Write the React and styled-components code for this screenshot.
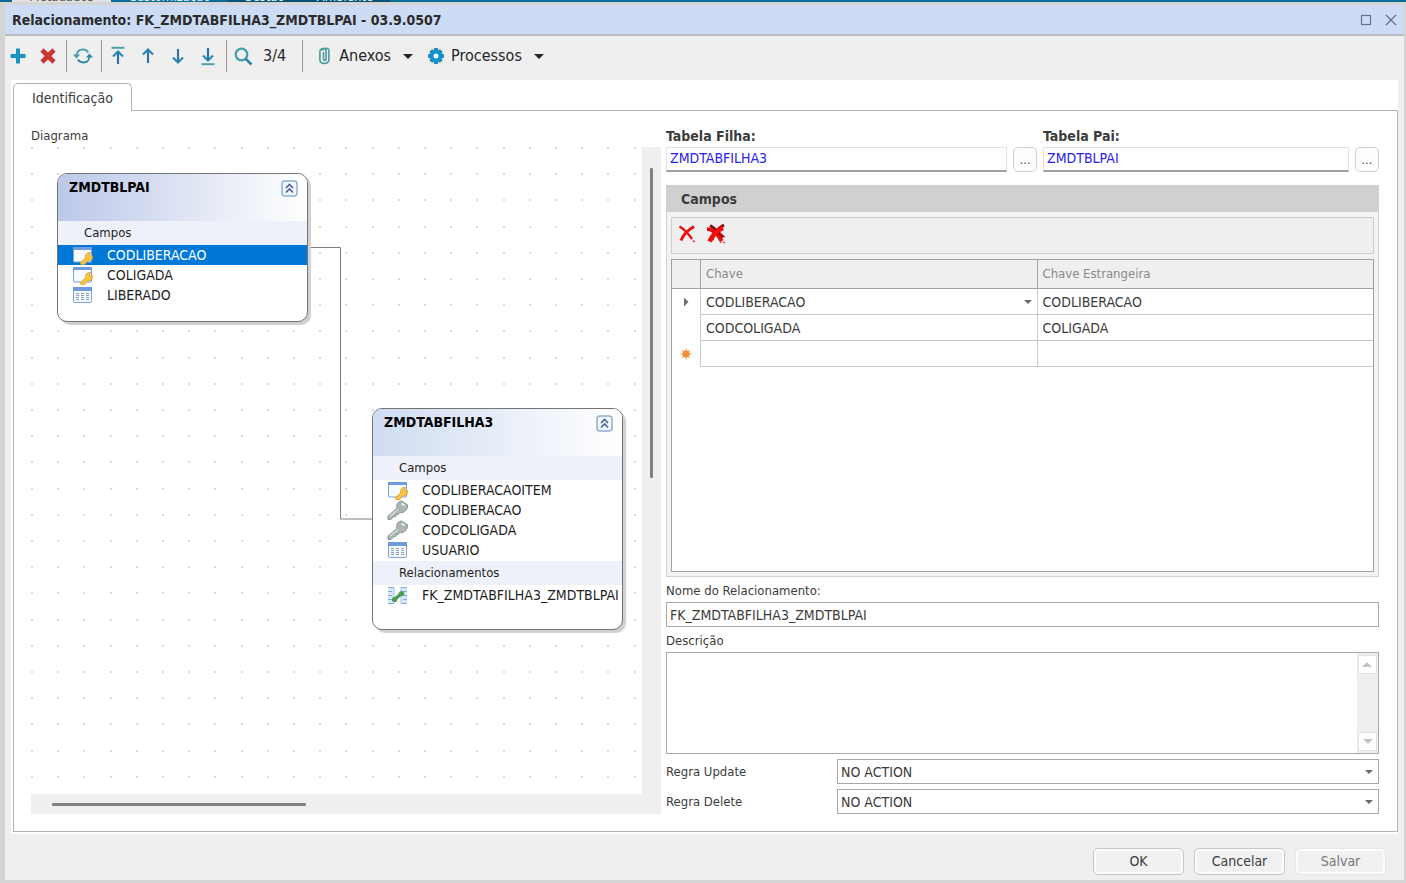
import React, { useState } from "react";
import styled, { createGlobalStyle, css } from "styled-components";

const GlobalStyle = createGlobalStyle`
  * {
    box-sizing: border-box;
  }

  body {
    margin: 0;
    background: #dcdcdc;
    color: #3c3c3c;
    font-family: "DejaVu Sans Condensed", "Noto Sans", sans-serif;
    font-size: 13px;
    line-height: 20px;
  }

  button,
  input,
  select,
  textarea {
    font: inherit;
    color: inherit;
  }
`;

/* ---------- window ---------- */

const Screen = styled.div`
  display: flex;
  flex-direction: column;
  min-height: 100vh;
`;

const BackTabs = styled.div`
  display: flex;
  align-items: flex-end;
  height: 2px;
  overflow: hidden;
  background: #0a6c98;
  color: #e8f2f7;
`;

const BackTab = styled.span`
  flex: none;
  width: ${({ $width }) => $width}px;
  margin-left: ${({ $gap }) => $gap || 0}px;
  line-height: 10px;
  text-align: center;
  background: ${({ $bg }) => $bg || "transparent"};
  color: ${({ $active }) => ($active ? "#555" : "inherit")};
`;

const Dialog = styled.main`
  flex: 1;
  display: flex;
  flex-direction: column;
  background: #efefef;
  border: solid #d4d4d4;
  border-width: 3px 2px 3px 5px;
`;

const TitleBar = styled.header`
  display: flex;
  align-items: center;
  justify-content: space-between;
  height: 31px;
  padding: 0 5px 0 7px;
  background: #cddbf5;
  border-bottom: 2px solid #b9bcc2;
`;

const Title = styled.h1`
  margin: 0;
  font-size: 14px;
  font-weight: bold;
  color: #2b2b2b;
`;

const WindowButtons = styled.div`
  display: flex;
  gap: 9px;
`;

const IconButton = styled.button`
  display: flex;
  align-items: center;
  justify-content: center;
  width: ${({ $width }) => $width || 26}px;
  height: 26px;
  padding: 0;
  border: 0;
  background: none;
`;

const WindowButton = styled(IconButton)`
  width: 16px;
`;

/* ---------- toolbar ---------- */

const Toolbar = styled.div`
  display: flex;
  align-items: center;
  height: 44px;
  padding-bottom: 4px;
  font-size: 16px;
  color: #262626;
`;

const ToolGroup = styled.div`
  display: flex;
  gap: 4px;
`;

const Separator = styled.span`
  width: 1px;
  height: 32px;
  margin: 0 3px 0 5px;
  background: #9a9a9a;
`;

const Counter = styled.span`
  padding: 0 11px 0 7px;
`;

const MenuButton = styled.button`
  display: flex;
  align-items: center;
  gap: 7px;
  height: 26px;
  padding: 0 5px 0 10px;
  border: 0;
  background: none;
`;

const Caret = styled.span`
  width: 0;
  margin-left: ${({ $gap }) => $gap || 0}px;
  border: solid transparent;
  border-width: ${({ $size }) => $size || 3}px;
  border-bottom-width: 0;
  border-top-color: ${({ $color }) => $color || "#6a6a6a"};
`;

/* ---------- tab page ---------- */

const TabArea = styled.div`
  flex: 1;
  display: flex;
  flex-direction: column;
  margin: 0 6px;
  padding: 3px 0 2px 2px;
  background: #fff;
`;

const TabButton = styled.button`
  position: relative;
  align-self: flex-start;
  width: 119px;
  height: 28px;
  margin-bottom: -1px;
  padding: 0;
  border: 1px solid #b4b4b4;
  border-bottom: 0;
  border-radius: 5px 5px 0 0;
  background: #fff;
  font-size: 14px;
`;

const TabPanel = styled.section`
  flex: 1;
  display: grid;
  grid-template-columns: 630px minmax(0, 1fr);
  column-gap: 5px;
  padding: 14px 18px 17px 17px;
  border: 1px solid #b4b4b4;
`;

const Column = styled.div`
  display: flex;
  flex-direction: column;
  min-width: 0;
`;

const TopLabel = styled.label`
  height: 22px;
  font-size: ${({ $bold }) => ($bold ? 14 : 13)}px;
  line-height: 22px;
  font-weight: ${({ $bold }) => ($bold ? "bold" : "normal")};
`;

/* ---------- diagram ---------- */

const DiagramFrame = styled.div`
  flex: 1;
  display: grid;
  grid-template-columns: minmax(0, 1fr) 19px;
  grid-template-rows: minmax(0, 1fr) 20px;
  background: #efefef;
`;

const Canvas = styled.div`
  position: relative;
  overflow: hidden;
  background: #fff;
`;

const CanvasLines = styled.svg`
  position: absolute;
  inset: 0;
  width: 100%;
  height: 100%;
`;

const VerticalTrack = styled.div`
  padding: 21px 8px;
`;

const HorizontalTrack = styled.div`
  padding: 9px 21px;
`;

const Thumb = styled.div`
  background: #808080;
  border-radius: 1px;
  ${({ $vertical }) =>
    $vertical
      ? css`
          width: 3px;
          height: 310px;
        `
      : css`
          width: 254px;
          height: 3px;
        `}
`;

const Node = styled.article`
  position: absolute;
  left: ${({ $x }) => $x}px;
  top: ${({ $y }) => $y}px;
  width: 251px;
  padding-bottom: ${({ $bottom }) => $bottom}px;
  overflow: hidden;
  background: #fff;
  border: 1px solid #747474;
  border-radius: 10px;
  box-shadow: 3px 3px 1px #d0d0d0;
  color: #1e1e1e;
`;

const NodeHeader = styled.div`
  display: flex;
  align-items: flex-start;
  justify-content: space-between;
  height: 47px;
  padding: 1px 9px 0 11px;
  background: linear-gradient(to right, ${({ $from }) => $from}, #fff);
`;

const NodeTitle = styled.h2`
  margin: 0;
  font-size: 14px;
  line-height: 24px;
  color: #000;
`;

const NodeSection = styled.div`
  height: 24px;
  padding-left: 26px;
  line-height: 24px;
  background: #eef1f9;
`;

const NodeList = styled.ul`
  margin: 0;
  padding: 0 0 1px;
  list-style: none;
`;

const NodeRow = styled.li`
  display: flex;
  align-items: center;
  gap: 14px;
  height: 20px;
  padding-left: 14px;
  font-size: 14px;
  white-space: nowrap;
  background: ${({ $selected }) => ($selected ? "#0078d7" : "transparent")};
  color: ${({ $selected }) => ($selected ? "#fff" : "inherit")};

  svg {
    flex: none;
  }
`;

/* ---------- right side ---------- */

const TableRefs = styled.div`
  display: grid;
  grid-template-columns: 370fr 335fr;
  column-gap: 6px;
  margin-bottom: 13px;
`;

const RefLine = styled.div`
  display: flex;
  gap: 6px;
`;

const RefInput = styled.input`
  flex: 1;
  min-width: 0;
  height: 25px;
  padding: 0 3px 2px;
  border: 1px solid #e2e2e2;
  border-bottom: 2px solid #a0a0a0;
  background: #fff;
  font-size: 14px;
  color: #2a20f0;
`;

const BrowseButton = styled.button`
  width: 24px;
  height: 25px;
  padding: 0;
  border: 1px solid #cfcfcf;
  border-radius: 5px;
  background: #fdfdfd;
  color: #6b4a52;
`;

const Group = styled.fieldset`
  flex: 1;
  display: flex;
  flex-direction: column;
  min-width: 0;
  margin: 0;
  padding: 0 4px 4px;
  border: 1px solid #d0d0d0;
  background: #f3f3f3;
`;

const GroupTitle = styled.h3`
  height: 26px;
  margin: 0 -4px 5px;
  padding-left: 14px;
  font-size: 14px;
  line-height: 26px;
  background: #d0d0d0;
`;

const GroupTools = styled.div`
  display: flex;
  align-items: center;
  height: 37px;
  margin-bottom: 5px;
  padding: 0 2px 4px;
  border: 1px solid #cdcdcd;
  background: #efefef;
`;

const GridFrame = styled.div`
  flex: 1;
  border: 1px solid #a0a0a0;
  background: #fff;
`;

const Grid = styled.table`
  width: 100%;
  table-layout: fixed;
  border-collapse: separate;
  border-spacing: 0;
`;

const HeadCell = styled.th`
  width: ${({ $width }) => ($width ? `${$width}px` : "auto")};
  height: 29px;
  padding: 0 5px;
  border-bottom: 1px solid #a4a4a4;
  border-left: ${({ $width }) => ($width ? "0" : "1px solid #a4a4a4")};
  background: #efefef;
  font-weight: normal;
  text-align: left;
  color: #8a8a8a;
`;

const Cell = styled.td`
  height: 26px;
  padding: 0 5px;
  border: solid #c8c8c8;
  border-width: 0 0 1px 1px;
  font-size: 14px;
`;

const MarkCell = styled.td`
  padding: 0;
  text-align: center;

  svg {
    display: block;
    margin: 0 auto;
  }
`;

const CellContent = styled.div`
  display: flex;
  align-items: center;
  justify-content: space-between;
`;

const Label = styled.label`
  height: 25px;
  padding-top: 3px;
  line-height: 22px;
`;

const boxed = css`
  border: 1px solid #a9a9a9;
  border-radius: 0;
  background: #fff;
`;

const TextInput = styled.input`
  ${boxed}
  width: 100%;
  height: 25px;
  padding: 0 3px;
  font-size: 14px;
`;

const MemoBox = styled.div`
  ${boxed}
  display: flex;
  height: 102px;
  margin-bottom: 5px;
`;

const Memo = styled.textarea`
  flex: 1;
  min-width: 0;
  padding: 3px;
  border: 0;
  resize: none;
`;

const MemoScroll = styled.div`
  display: flex;
  flex-direction: column;
  justify-content: space-between;
  width: 21px;
  padding: 2px 1px;
  background: #efefef;
`;

const MemoArrow = styled.button`
  display: flex;
  align-items: center;
  justify-content: center;
  height: 19px;
  padding: 0;
  border: 1px solid #e2e2e2;
  background: #fff;
  transform: ${({ $up }) => ($up ? "rotate(180deg)" : "none")};
`;

const RuleRow = styled.div`
  display: grid;
  grid-template-columns: 171px minmax(0, 1fr);
  line-height: 25px;

  & + & {
    margin-top: 5px;
  }
`;

const SelectBox = styled.div`
  ${boxed}
  display: grid;
  align-items: center;
  height: 25px;

  > * {
    grid-area: 1 / 1;
  }

  ${Caret} {
    justify-self: end;
    margin-right: 5px;
    pointer-events: none;
  }
`;

const Select = styled.select`
  width: 100%;
  height: 23px;
  padding: 0 3px;
  border: 0;
  background: none;
  font-size: 14px;
  appearance: none;
`;

const Footer = styled.footer`
  display: flex;
  justify-content: flex-end;
  gap: 10px;
  padding: 14px 18px 5px;
`;

const FooterButton = styled.button`
  width: 91px;
  height: 27px;
  padding: 0 0 2px;
  border: 1px solid #c6c6c6;
  border-radius: 5px;
  background: #f1f1f1;
  box-shadow: inset 0 0 0 2px #fcfcfc;
  font-size: 14px;

  &:disabled {
    border-color: #e6e6e6;
    color: #777;
  }
`;

/* ---------- icons ---------- */

const ArrowIcon = ({ down, bar }) => (
  <svg width="18" height="20" viewBox="0 0 18 20" fill="none" strokeWidth="2">
    <g transform={down ? "rotate(180 9 10)" : undefined}>
      {bar && <path d="M2.5 1.8h13" stroke="#4aa3a8" />}
      <path d={bar ? "M9 5.500V18" : "M9 4v13"} stroke="#2f73a8" strokeWidth="2.200" />
      <path d={bar ? "M4 10.500 9 5.500l5 5" : "M4 8.500l5-5 5 5"} stroke="#2385b4" />
    </g>
  </svg>
);

const AddIcon = () => (
  <svg width="16" height="16" viewBox="0 0 16 16">
    <path d="M8 0.500v15M0.500 8h15" stroke="#1a93c0" strokeWidth="4" />
  </svg>
);

const RemoveIcon = () => (
  <svg width="16" height="16" viewBox="0 0 16 16">
    <path d="M2 2l12 12M14 2L2 14" stroke="#cc3430" strokeWidth="4.6" />
  </svg>
);

const RefreshIcon = () => (
  <svg width="20" height="18" viewBox="0 0 20 18">
    <g fill="none" strokeWidth="1.8">
      <path d="M3.5 8.5C3.8 4.6 6.5 2.5 9.8 2.5c2.400 0 4.200 1 5.400 2.900" stroke="#4aa3a8" />
      <path d="M16.500 9.500c-.3 3.900-3 6-6.300 6-2.400 0-4.200-1-5.400-2.900" stroke="#2c86a8" />
    </g>
    <path d="M0 7.500h7L3.500 11.500z" fill="#3f9bb0" />
    <path d="M13 10.500h7L16.500 6.500z" fill="#2c86a8" />
  </svg>
);

const SearchIcon = () => (
  <svg width="19" height="19" viewBox="0 0 19 19" fill="none">
    <circle cx="7.500" cy="7.500" r="5.800" stroke="#3f9fa8" strokeWidth="2.200" />
    <path d="M11.800 11.800 17.500 17.500" stroke="#2b7fa6" strokeWidth="2.600" />
  </svg>
);

const ClipIcon = () => (
  <svg width="16" height="18" viewBox="0 0 16 18" fill="none">
    <path
      d="M7.500 5v7.200c0 1.600 2.600 1.600 2.600 0V4.500c0-4-6.200-4-6.200 0v8.300c0 4.800 9 4.800 9 0V3.500c0-3-6-3-7 0"
      stroke="#4b9a9c"
      strokeWidth="1.600"
    />
  </svg>
);

const GearIcon = () => (
  <svg width="16" height="16" viewBox="0 0 16 16">
    <g stroke="#3a86a5" strokeWidth="4.200">
      <path d="M8 0v16M0 8h16M2.600 2.600l10.800 10.800M13.400 2.600 2.600 13.400" />
    </g>
    <circle cx="8" cy="8" r="6.300" fill="#0c94cc" />
    <circle cx="8" cy="8" r="2.500" fill="#f4f4f4" />
  </svg>
);

const CollapseIcon = () => (
  <svg width="17" height="17" viewBox="0 0 17 17">
    <rect x="1" y="1" width="15" height="15" rx="3" fill="#f2f7fc" stroke="#8cb0cf" strokeWidth="1.500" />
    <path
      d="M5 8l3.500-3.500L12 8M5 12.500 8.500 9l3.500 3.500"
      fill="none"
      stroke="#51619f"
      strokeWidth="1.700"
    />
  </svg>
);

const PrimaryKeyIcon = () => (
  <svg width="21" height="20" viewBox="0 0 21 20">
    <rect x="1.500" y="2.500" width="18" height="14.500" rx="1" fill="#f7fbff" stroke="#7ba3dc" />
    <path d="M1 2h19v3H1z" fill="#6f9bdd" />
    <path
      d="M8.500 17.500 13.500 13c-.8-3.500 2-6.200 5-5.500L17.500 10l1 1.300 2.200-.6c.5 3.400-2 5.800-5 5L12.500 19.500H9z"
      fill="#f8c63e"
      stroke="#dc9d2c"
      strokeWidth="0.900"
    />
  </svg>
);

const FieldIcon = () => (
  <svg width="21" height="18" viewBox="0 0 21 18">
    <rect x="1.500" y="1.500" width="18" height="15" rx="1" fill="#f2f8ff" stroke="#7ba3dc" />
    <path d="M1 1h19v4H1z" fill="#6f9bdd" />
    <path
      d="M4 7.500h3M4 9.500h3M4 11.500h3M4 13.500h3M9 7.500h3M9 9.500h3M9 11.500h3M9 13.500h3M14 7.500h3M14 9.500h3M14 11.500h3M14 13.500h3"
      stroke="#9aa0aa"
    />
  </svg>
);

const ForeignKeyIcon = () => (
  <svg width="21" height="20" viewBox="0 0 21 20">
    <path
      d="M1 16 9.800 8.500C9 4 11.500 1 14.500 1l6 3.800c.6 4.600-3 8.400-7.500 7.800L11 14.500l-2 .2-.3 1.800-2.200.3L4 19.500H1z"
      fill="#aeb5b5"
      stroke="#838a8a"
      strokeWidth="0.900"
    />
    <path d="M14.500 3.500l3 2" stroke="#f2f4f4" strokeWidth="1.800" />
    <path d="M2.500 16.500 11 9.500" stroke="#d9dddd" strokeWidth="1.200" />
  </svg>
);

const RelationIcon = () => (
  <svg width="21" height="19" viewBox="0 0 21 19">
    <path d="M1 1h6v17H1zM14 1h6v17h-6z" fill="#d5e7fa" />
    <path
      d="M1 1.500h6M1 5.500h4M1 9.500h4M1 13.500h4M1 17.500h6M14 1.500h6M16 5.500h4M16 9.500h4M16 13.500h4M14 17.500h6"
      stroke="#86abdb"
    />
    <path d="M7 1v17M14 1v17" stroke="#a9c7ea" />
    <path d="M7 14 15 7" stroke="#4c9b52" strokeWidth="3.400" />
    <circle cx="7.500" cy="13.500" r="2.600" fill="#4c9b52" />
    <circle cx="14.500" cy="7.500" r="2.600" fill="#4c9b52" />
  </svg>
);

const DeleteIcon = () => (
  <svg width="18" height="18" viewBox="0 0 18 18" fill="none" stroke="#f00c0c">
    <path d="M1.500 1.500C6 4 10.500 9 14 14" strokeWidth="2.400" />
    <path d="M16 1.500C10 5 5 10 3 15.500" strokeWidth="2.800" />
    <path d="M15 15.500l1.500 1.500" strokeWidth="1.200" />
  </svg>
);

const DeleteAllIcon = () => (
  <svg width="20" height="20" viewBox="0 0 20 20" fill="none">
    <path d="M4 1.500c5 3 9 7 13 12M18 1C12 4 8 10 6 16" stroke="#8e0909" strokeWidth="3" />
    <path d="M1 5c5 0 11 6 15 12" stroke="#e60a0a" strokeWidth="3.600" />
    <path d="M17 4C10 7 6 12 3.500 17.500" stroke="#f60c0c" strokeWidth="4.600" />
    <path d="M14 9l5 4M12 14l3 5M17 18l2 1" stroke="#e62a2a" strokeWidth="1.200" />
  </svg>
);

const RowMarker = () => (
  <svg width="6" height="10" viewBox="0 0 6 10">
    <path d="M1 0.500 5.500 5 1 9.500z" fill="#6f6f6f" />
  </svg>
);

const NewRowMarker = () => (
  <svg width="12" height="12" viewBox="0 0 12 12">
    <path
      d="M6 0.500v11M0.500 6h11M2.200 2.200l7.600 7.600M9.800 2.200 2.200 9.800"
      stroke="#f3b172"
      strokeWidth="1.300"
    />
    <circle cx="6" cy="6" r="3.500" fill="#f0913a" />
  </svg>
);

const icons = {
  primary: PrimaryKeyIcon,
  foreign: ForeignKeyIcon,
  field: FieldIcon,
  relation: RelationIcon,
};

/* ---------- diagram parts ---------- */

const dotSteps = [0, 26, 52, 79, 105];

const nodes = [
  {
    title: "ZMDTBLPAI",
    x: 26,
    y: 26,
    bottom: 15,
    from: "#bcc8e8",
    sections: [
      {
        name: "Campos",
        rows: [
          { icon: "primary", text: "CODLIBERACAO", selected: true },
          { icon: "primary", text: "COLIGADA" },
          { icon: "field", text: "LIBERADO" },
        ],
      },
    ],
  },
  {
    title: "ZMDTABFILHA3",
    x: 341,
    y: 261,
    bottom: 23,
    from: "#cfdcf1",
    sections: [
      {
        name: "Campos",
        rows: [
          { icon: "primary", text: "CODLIBERACAOITEM" },
          { icon: "foreign", text: "CODLIBERACAO" },
          { icon: "foreign", text: "CODCOLIGADA" },
          { icon: "field", text: "USUARIO" },
        ],
      },
      {
        name: "Relacionamentos",
        rows: [{ icon: "relation", text: "FK_ZMDTABFILHA3_ZMDTBLPAI" }],
      },
    ],
  },
];

function Diagram() {
  return (
    <DiagramFrame>
      <Canvas>
        <CanvasLines>
          <defs>
            <pattern id="dots" width="131" height="131" patternUnits="userSpaceOnUse">
              {dotSteps.map((y) =>
                dotSteps.map((x) => (
                  <rect key={`${x}-${y}`} x={x} y={y} width="2" height="2" fill="#dadada" />
                ))
              )}
            </pattern>
          </defs>
          <rect width="100%" height="100%" fill="url(#dots)" />
          <path d="M277 100.500h32.500v271.500h32" fill="none" stroke="#7c7c7c" />
        </CanvasLines>
        {nodes.map((node) => (
          <Node key={node.title} $x={node.x} $y={node.y} $bottom={node.bottom}>
            <NodeHeader $from={node.from}>
              <NodeTitle>{node.title}</NodeTitle>
              <IconButton $width={17} aria-label="Recolher">
                <CollapseIcon />
              </IconButton>
            </NodeHeader>
            {node.sections.map((section) => (
              <React.Fragment key={section.name}>
                <NodeSection>{section.name}</NodeSection>
                <NodeList>
                  {section.rows.map((row) => {
                    const Icon = icons[row.icon];
                    return (
                      <NodeRow key={row.text} $selected={row.selected}>
                        <Icon />
                        {row.text}
                      </NodeRow>
                    );
                  })}
                </NodeList>
              </React.Fragment>
            ))}
          </Node>
        ))}
      </Canvas>
      <VerticalTrack>
        <Thumb $vertical />
      </VerticalTrack>
      <HorizontalTrack>
        <Thumb />
      </HorizontalTrack>
    </DiagramFrame>
  );
}

function TableRef({ id, label, value }) {
  const [text, setText] = useState(value);

  return (
    <Column>
      <TopLabel htmlFor={id} $bold>
        {label}
      </TopLabel>
      <RefLine>
        <RefInput id={id} value={text} onChange={(e) => setText(e.target.value)} />
        <BrowseButton aria-label={`Procurar ${label}`}>...</BrowseButton>
      </RefLine>
    </Column>
  );
}

function Rule({ id, label }) {
  return (
    <RuleRow>
      <label htmlFor={id}>{label}</label>
      <SelectBox>
        <Select id={id} defaultValue="NO ACTION">
          <option>NO ACTION</option>
          <option>CASCADE</option>
          <option>SET NULL</option>
        </Select>
        <Caret $size={4} />
      </SelectBox>
    </RuleRow>
  );
}

function App() {
  const [name, setName] = useState("FK_ZMDTABFILHA3_ZMDTBLPAI");
  const [description, setDescription] = useState("");

  return (
    <Screen>
      <GlobalStyle />
      <BackTabs>
        <BackTab $width={99} $gap={12} $bg="#e2e2e2" $active>
          Metadados
        </BackTab>
        <BackTab $width={117}>Customização</BackTab>
        <BackTab $width={72} $bg="#075274">
          Gestão
        </BackTab>
        <BackTab $width={90} $bg="#075274">
          Ambiente
        </BackTab>
      </BackTabs>
      <Dialog>
        <TitleBar>
          <Title>Relacionamento: FK_ZMDTABFILHA3_ZMDTBLPAI - 03.9.0507</Title>
          <WindowButtons>
            <WindowButton aria-label="Maximizar">
              <svg width="12" height="12" viewBox="0 0 12 12">
                <rect x="1.500" y="1.500" width="9" height="9" fill="none" stroke="#66738a" strokeWidth="1.200" />
              </svg>
            </WindowButton>
            <WindowButton aria-label="Fechar">
              <svg width="12" height="12" viewBox="0 0 12 12">
                <path d="M1 1l10 10M11 1L1 11" stroke="#66738a" strokeWidth="1.300" />
              </svg>
            </WindowButton>
          </WindowButtons>
        </TitleBar>
        <Toolbar>
          <ToolGroup>
            <IconButton aria-label="Incluir">
              <AddIcon />
            </IconButton>
            <IconButton aria-label="Excluir">
              <RemoveIcon />
            </IconButton>
          </ToolGroup>
          <Separator />
          <IconButton aria-label="Atualizar">
            <RefreshIcon />
          </IconButton>
          <Separator />
          <ToolGroup>
            <IconButton aria-label="Primeiro">
              <ArrowIcon bar />
            </IconButton>
            <IconButton aria-label="Anterior">
              <ArrowIcon />
            </IconButton>
            <IconButton aria-label="Próximo">
              <ArrowIcon down />
            </IconButton>
            <IconButton aria-label="Último">
              <ArrowIcon down bar />
            </IconButton>
          </ToolGroup>
          <Separator />
          <IconButton aria-label="Procurar">
            <SearchIcon />
          </IconButton>
          <Counter>3/4</Counter>
          <Separator />
          <MenuButton>
            <ClipIcon />
            Anexos
            <Caret $size={5} $gap={5} $color="#262626" />
          </MenuButton>
          <MenuButton>
            <GearIcon />
            Processos
            <Caret $size={5} $gap={5} $color="#262626" />
          </MenuButton>
        </Toolbar>
        <TabArea>
          <TabButton>Identificação</TabButton>
          <TabPanel>
            <Column>
              <TopLabel as="div">Diagrama</TopLabel>
              <Diagram />
            </Column>
            <Column>
              <TableRefs>
                <TableRef id="child" label="Tabela Filha:" value="ZMDTABFILHA3" />
                <TableRef id="parent" label="Tabela Pai:" value="ZMDTBLPAI" />
              </TableRefs>
              <Group>
                <GroupTitle>Campos</GroupTitle>
                <GroupTools>
                  <IconButton aria-label="Excluir campo">
                    <DeleteIcon />
                  </IconButton>
                  <IconButton $width={32} aria-label="Excluir todos">
                    <DeleteAllIcon />
                  </IconButton>
                </GroupTools>
                <GridFrame>
                  <Grid>
                    <thead>
                      <tr>
                        <HeadCell $width={28} />
                        <HeadCell>Chave</HeadCell>
                        <HeadCell>Chave Estrangeira</HeadCell>
                      </tr>
                    </thead>
                    <tbody>
                      <tr>
                        <MarkCell>
                          <RowMarker />
                        </MarkCell>
                        <Cell>
                          <CellContent>
                            CODLIBERACAO
                            <Caret $size={4} />
                          </CellContent>
                        </Cell>
                        <Cell>CODLIBERACAO</Cell>
                      </tr>
                      <tr>
                        <MarkCell />
                        <Cell>CODCOLIGADA</Cell>
                        <Cell>COLIGADA</Cell>
                      </tr>
                      <tr>
                        <MarkCell>
                          <NewRowMarker />
                        </MarkCell>
                        <Cell />
                        <Cell />
                      </tr>
                    </tbody>
                  </Grid>
                </GridFrame>
              </Group>
              <Label htmlFor="name">Nome do Relacionamento:</Label>
              <TextInput id="name" value={name} onChange={(e) => setName(e.target.value)} />
              <Label htmlFor="description">Descrição</Label>
              <MemoBox>
                <Memo
                  id="description"
                  value={description}
                  onChange={(e) => setDescription(e.target.value)}
                />
                <MemoScroll>
                  <MemoArrow $up aria-label="Subir">
                    <Caret $size={5} $color="#c4c4c4" />
                  </MemoArrow>
                  <MemoArrow aria-label="Descer">
                    <Caret $size={5} $color="#c4c4c4" />
                  </MemoArrow>
                </MemoScroll>
              </MemoBox>
              <Rule id="update" label="Regra Update" />
              <Rule id="delete" label="Regra Delete" />
            </Column>
          </TabPanel>
        </TabArea>
        <Footer>
          <FooterButton>OK</FooterButton>
          <FooterButton>Cancelar</FooterButton>
          <FooterButton disabled>Salvar</FooterButton>
        </Footer>
      </Dialog>
    </Screen>
  );
}

export default App;
